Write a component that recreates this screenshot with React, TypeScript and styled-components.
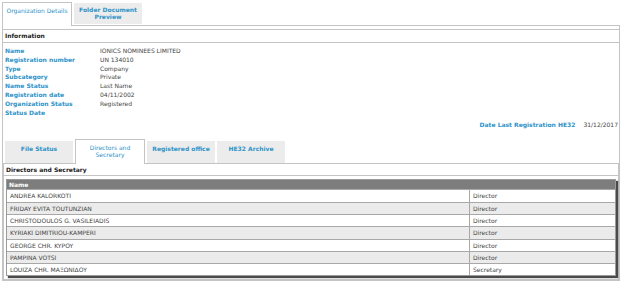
import React from "react";
import styled, { createGlobalStyle } from "styled-components";

const Global = createGlobalStyle`
  html, body { margin: 0; padding: 0; background: #fff; }
  body { font-family: "DejaVu Sans", Verdana, sans-serif; font-size: 6px; color: #333; }
`;

const Page = styled.div`
  width: 624px;
  height: 283px;
  padding: 2px 4px 0 2px;
  box-sizing: border-box;
  overflow: hidden;
`;

const TabBar = styled.div<{ $inner?: boolean }>`
  display: flex;
  align-items: flex-start;
  gap: 2px;
  padding-left: ${(p) => (p.$inner ? "2px" : "0")};
`;

const Tab = styled.div<{ $active?: boolean }>`
  position: relative;
  z-index: 1;
  box-sizing: border-box;
  width: ${(p) => (p.$active ? "70px" : "68px")};
  height: ${(p) => (p.$active ? "24px" : "21px")};
  margin-top: ${(p) => (p.$active ? "0" : "1px")};
  margin-bottom: ${(p) => (p.$active ? "-1px" : "0")};
  padding-top: ${(p) => (p.$active ? "4px" : "3px")};
  background: ${(p) => (p.$active ? "#fff" : "#ececec")};
  border: ${(p) => (p.$active ? "1px solid #c4c4c4" : "none")};
  border-bottom: none;
  color: #2e93c9;
  font-weight: ${(p) => (p.$active ? "normal" : "bold")};
  text-align: center;
  line-height: 7px;
`;

const InnerTab = styled(Tab)`
  height: ${(p) => (p.$active ? "25px" : "22px")};
  margin-top: ${(p) => (p.$active ? "0" : "2px")};
  padding-top: ${(p) => (p.$active ? "4px" : "3px")};
`;

const Panel = styled.div`
  border: 1px solid #c4c4c4;
  height: 256px;
  box-sizing: border-box;
  padding-top: 3px;
`;

const SectionHead = styled.div`
  height: 14px;
  box-sizing: border-box;
  border-top: 1px solid #c4c4c4;
  border-bottom: 1px solid #c4c4c4;
  padding-left: 2px;
  line-height: 12px;
  font-weight: bold;
  color: #222;
`;

const Fields = styled.div`
  display: grid;
  grid-template-columns: 95px 1fr;
  padding: 4px 0 0 2px;
  line-height: 8.8px;
`;

const Label = styled.div`
  color: #2e93c9;
  font-weight: bold;
`;

const Value = styled.div`
  color: #444;
`;

const LastReg = styled.div`
  display: flex;
  justify-content: flex-end;
  gap: 8px;
  padding-right: 1px;
  margin-top: 3px;
  line-height: 9px;
`;

const InnerArea = styled.div`
  margin-top: 10px;
`;

const InnerPanel = styled.div`
  border: 1px solid #c4c4c4;
  height: 117px;
  box-sizing: border-box;
`;

const InnerHead = styled.div`
  height: 11px;
  border-bottom: 1px solid #c4c4c4;
  padding-left: 2px;
  line-height: 11px;
  font-weight: bold;
  color: #222;
`;

const Table = styled.div`
  margin: 3px 2px 0 2px;
  box-shadow: 2px 2px 1px #4a4a4a;
  border: 1px solid #9a9a9a;
`;

const HeadRow = styled.div`
  height: 9px;
  line-height: 9px;
  background: #7d7d7d;
  color: #fff;
  font-weight: bold;
  padding-left: 2px;
`;

const Row = styled.div<{ $alt: boolean }>`
  display: grid;
  grid-template-columns: 462px 1fr;
  box-sizing: border-box;
  height: 12.3px;
  line-height: 11px;
  border-top: 1px solid #a8a8a8;
  background: ${(p) => (p.$alt ? "#ebebeb" : "#fff")};
  color: #444;
`;

const Cell = styled.div<{ $divider?: boolean }>`
  padding-left: 3px;
  border-left: ${(p) => (p.$divider ? "1px solid #a8a8a8" : "none")};
`;

const TabText = styled.div<{ $pad?: number }>`
  padding-top: ${(p) => p.$pad ?? 0}px;
`;

const fields: [string, string][] = [
  ["Name", "IONICS NOMINEES LIMITED"],
  ["Registration number", "UN 134010"],
  ["Type", "Company"],
  ["Subcategory", "Private"],
  ["Name Status", "Last Name"],
  ["Registration date", "04/11/2002"],
  ["Organization Status", "Registered"],
  ["Status Date", ""],
];

const people: [string, string][] = [
  ["ANDREA KALORKOTI", "Director"],
  ["FRIDAY EVITA TOUTUNZIAN", "Director"],
  ["CHRISTODOULOS G. VASILEIADIS", "Director"],
  ["KYRIAKI DIMITRIOU-KAMPERI", "Director"],
  ["GEORGE CHR. KYPOY", "Director"],
  ["PAMPINA VOTSI", "Director"],
  ["LOUIZA CHR. MAΞΩΝΙΔΟΥ", "Secretary"],
];

export default function App() {
  return (
    <Page>
      <Global />
      <TabBar>
        <Tab $active>
          <TabText>Organization Details</TabText>
        </Tab>
        <Tab>
          Folder Document
          <br />
          Preview
        </Tab>
      </TabBar>
      <Panel>
        <SectionHead>Information</SectionHead>
        <Fields>
          {fields.map(([l, v]) => (
            <React.Fragment key={l}>
              <Label>{l}</Label>
              <Value>{v}</Value>
            </React.Fragment>
          ))}
        </Fields>
        <LastReg>
          <Label>Date Last Registration HE32</Label>
          <Value>31/12/2017</Value>
        </LastReg>
        <InnerArea>
          <TabBar $inner>
            <InnerTab>
              <TabText $pad={1}>File Status</TabText>
            </InnerTab>
            <InnerTab $active>
              Directors and
              <br />
              Secretary
            </InnerTab>
            <InnerTab>
              <TabText $pad={1}>Registered office</TabText>
            </InnerTab>
            <InnerTab>
              <TabText $pad={1}>HE32 Archive</TabText>
            </InnerTab>
          </TabBar>
          <InnerPanel>
            <InnerHead>Directors and Secretary</InnerHead>
            <Table>
              <HeadRow>Name</HeadRow>
              {people.map(([n, r], i) => (
                <Row key={n} $alt={i % 2 === 1}>
                  <Cell>{n}</Cell>
                  <Cell $divider>{r}</Cell>
                </Row>
              ))}
            </Table>
          </InnerPanel>
        </InnerArea>
      </Panel>
    </Page>
  );
}
